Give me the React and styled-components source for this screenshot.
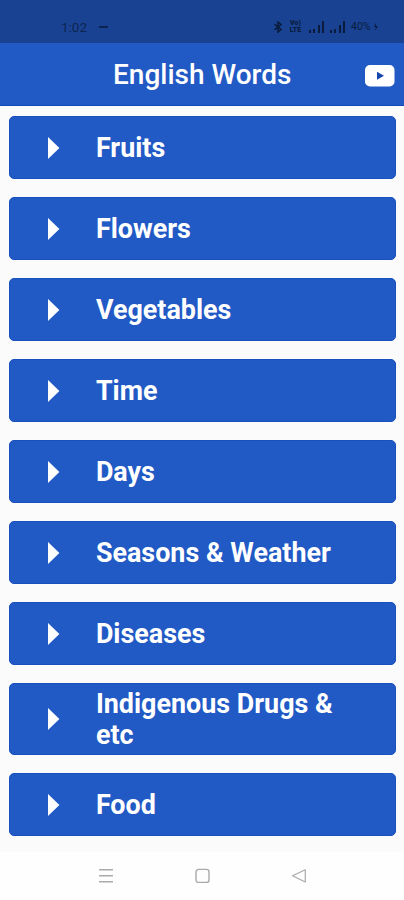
import React from 'react';
import styled, { createGlobalStyle } from 'styled-components';

const GlobalStyle = createGlobalStyle`
    * {
        box-sizing: border-box;
    }
    body {
        margin: 0;
        background: #fefefe;
        font-family: Roboto, sans-serif;
    }
`;

const Screen = styled.div`
    display: flex;
    flex-direction: column;
    width: 404px;
    height: 900px;
    overflow: hidden;
`;

const StatusBar = styled.div`
    display: flex;
    align-items: center;
    justify-content: space-between;
    height: 43px;
    padding: 10px 25px 0 61px;
    background: #194392;
    color: #0d2453;
`;

const Clock = styled.div`
    display: flex;
    align-items: center;
    gap: 12px;
    font-size: 13.5px;
`;

const Dash = styled.span`
    width: 9px;
    height: 2px;
    background: #0d2453;
`;

const StatusIcons = styled.div`
    display: flex;
    align-items: center;
    color: #0a1b3d;
`;

const Volte = styled.div`
    display: flex;
    flex-direction: column;
    width: 15px;
    margin: 0 6px 0 5px;
    font-size: 7px;
    font-weight: 900;
    line-height: 7px;
    text-align: center;
`;

const Signal = styled.svg`
    margin-right: 5px;
`;

const Battery = styled.span`
    width: 22px;
    font-size: 10.5px;
`;

const Header = styled.header`
    display: flex;
    align-items: center;
    justify-content: space-between;
    height: 63px;
    padding: 2px 10px 0 113px;
    background: #2159c5;
    border-bottom: 1px solid #124abb;
    color: white;
`;

const Title = styled.h1`
    margin: 0;
    font-size: 28px;
    font-weight: 500;
    line-height: 32px;
    white-space: nowrap;
`;

const VideoIcon = styled.svg`
    margin: 1px -1px 0 0;
`;

const List = styled.main`
    display: flex;
    flex-direction: column;
    gap: 18px;
    height: 746px;
    padding: 10.4px 8.5px 0 9.4px;
    background: #fbfbfb;
`;

const Row = styled.div`
    display: flex;
    align-items: center;
    flex-shrink: 0;
    height: ${props => props.$tall ? '72px' : '63px'};
    padding: 0 50px 0 37.5px;
    border: 1px solid #1950bf;
    border-radius: 5px;
    background: #2159c5;
`;

const Arrow = styled.svg`
    flex-shrink: 0;
    margin-right: 36px;
`;

const Name = styled.span`
    padding-top: 2px;
    color: white;
    font-size: 26.9px;
    font-weight: 700;
    line-height: 31.5px;
`;

const NavBar = styled.nav`
    display: flex;
    justify-content: space-between;
    padding: 16px 97px 0 98px;
`;

const categories = [
    'Fruits',
    'Flowers',
    'Vegetables',
    'Time',
    'Days',
    'Seasons & Weather',
    'Diseases',
    'Indigenous Drugs & etc',
    'Food'
];

function SignalBars() {
    return (
        <Signal width="16" height="12" viewBox="0 0 16 12" fill="currentColor">
            <rect x="0" y="9" width="2" height="3" />
            <rect x="4" y="8" width="2" height="4" />
            <rect x="9" y="4" width="2" height="8" />
            <rect x="13" y="0" width="2" height="12" />
        </Signal>
    );
}

function Category(props) {
    return (
        <Row $tall={props.name.length > 20}>
            <Arrow width="12" height="22" viewBox="0 0 12 22">
                <path d="M0 0L11.4 11L0 22Z" fill="white" />
            </Arrow>
            <Name>{props.name}</Name>
        </Row>
    );
}

function App() {
    return (
        <Screen>
            <GlobalStyle />
            <StatusBar>
                <Clock>1:02<Dash /></Clock>
                <StatusIcons>
                    <svg width="10" height="12" viewBox="0 0 10 12" fill="none" stroke="currentColor" strokeWidth="1.5">
                        <path d="M1.5 3.2L8 8.5L5 11V1L8 3.5L1.5 8.8" />
                    </svg>
                    <Volte>
                        <span>Vo)</span>
                        <span>LTE</span>
                    </Volte>
                    <SignalBars />
                    <SignalBars />
                    <Battery>40%</Battery>
                    <svg width="6" height="8" viewBox="0 0 6 8" fill="currentColor">
                        <path d="M3 0L1 4H3L2 8L5 3H3Z" />
                    </svg>
                </StatusIcons>
            </StatusBar>
            <Header>
                <Title>English Words</Title>
                <VideoIcon width="30" height="22" viewBox="0 0 30 22">
                    <rect width="29.5" height="21.5" rx="5" fill="white" />
                    <path d="M12 6.8L19 10.7L12 14.8Z" fill="#1546ac" />
                </VideoIcon>
            </Header>
            <List>
                {categories.map(ele => <Category key={ele} name={ele} />)}
            </List>
            <NavBar>
                <svg width="16" height="16" viewBox="0 0 16 16" stroke="#aaa" strokeWidth="1.4">
                    <path d="M1 1.8H15M1 7.8H15M1 13.8H15" />
                </svg>
                <svg width="16" height="16" viewBox="0 0 16 16" fill="none" stroke="#aaa" strokeWidth="1.4">
                    <rect x="1" y="1.4" width="13" height="13" rx="2.5" />
                </svg>
                <svg width="16" height="16" viewBox="0 0 16 16" fill="none" stroke="#aaa" strokeWidth="1.2" strokeLinejoin="round">
                    <path d="M14.3 1.7V14L1.5 7.8Z" />
                </svg>
            </NavBar>
        </Screen>
    );
}

export default App;
